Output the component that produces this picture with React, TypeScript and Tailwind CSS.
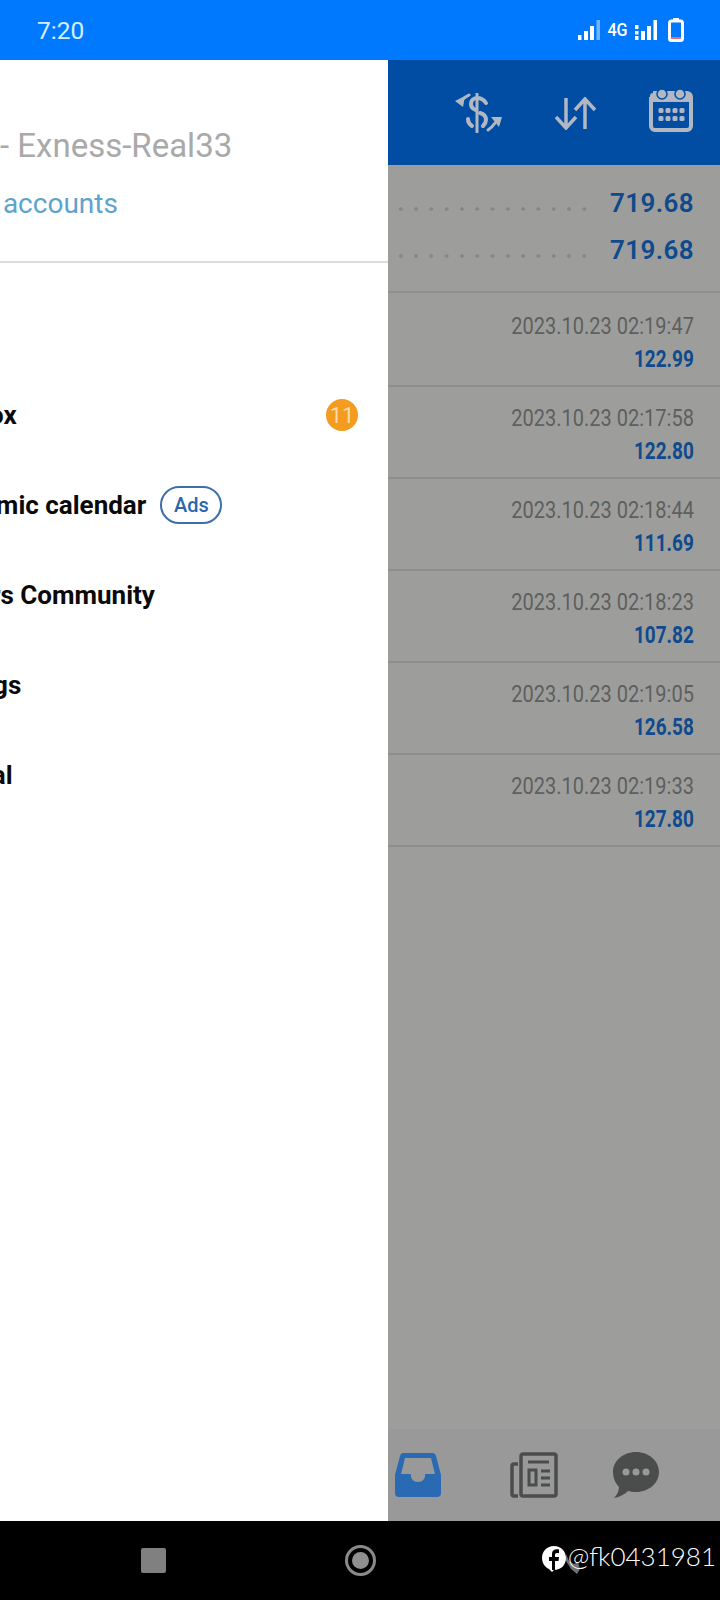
const roboto = "[font-family:Roboto,'Liberation_Sans',sans-serif]"

const menuItems = ['Mailbox', 'Economic calendar', 'Traders Community', 'Settings', 'Journal']

const deals = [
    { time: '2023.10.23 02:19:47', price: '122.99' },
    { time: '2023.10.23 02:17:58', price: '122.80' },
    { time: '2023.10.23 02:18:44', price: '111.69' },
    { time: '2023.10.23 02:18:23', price: '107.82' },
    { time: '2023.10.23 02:19:05', price: '126.58' },
    { time: '2023.10.23 02:19:33', price: '127.80' }
]

const SignalIcon = ({ dots }: { dots?: boolean }) => (
    <svg width="22" height="20" viewBox="0 0 22 20" fill="#fff">
        {dots ? (
            <>
                <rect x="0" y="5" width="3.500" height="4" />
                <rect x="0" y="11" width="3.500" height="3.500" />
                <rect x="0" y="16" width="3.500" height="4" />
            </>
        ) : (
            <rect x="0" y="15" width="3.500" height="5" />
        )}
        <rect x="6" y="11" width="4" height="9" />
        <rect x="12" y="6" width="4" height="14" />
        <rect x="18.500" y="0" width="3.500" height="20" opacity={dots ? 1 : 0.45} />
    </svg>
)

const BatteryIcon = () => (
    <svg width="16" height="24" viewBox="0 0 16 24">
        <rect x="5" y="0" width="6" height="3" fill="#fff" />
        <rect x="1.500" y="3" width="13" height="19.500" rx="2" fill="none" stroke="#fff" strokeWidth="3" />
        <rect x="3" y="19" width="10" height="2" fill="#e07070" />
    </svg>
)

const ExchangeIcon = () => (
    <svg className="mt-[5px]" width="48" height="40" viewBox="0 0 48 40" fill="none" stroke="#b2b8c2" strokeLinecap="round">
        <path d="M22 1v38" strokeWidth="3" />
        <path d="M31 10c-2-3-5-5-9-5-4 0-6 3-6 6 0 3 2 5 5 6" strokeWidth="4" />
        <path d="M25 20c4 1 6 4 6 7 0 2-1 4-3 6" strokeWidth="4" />
        <path d="M13 26c0 3 1 5 4 7" strokeWidth="4" />
        <path d="M8 6c2-2 4-3 6-4" strokeWidth="3" />
        <path d="M0 8l10-5-2 11z" fill="#b2b8c2" stroke="none" />
        <path d="M33 37c3-2 5-4 7-7" strokeWidth="3" />
        <path d="M47 24l-11 0 8 10z" fill="#b2b8c2" stroke="none" />
    </svg>
)

const SortIcon = () => (
    <svg className="mt-[6px]" width="43" height="33" viewBox="0 0 43 33" fill="none" stroke="#b2b8c2" strokeWidth="3.500">
        <path d="M12 1v30M2 20l10 11 10-11" />
        <path d="M31 32V2M21 13L31 2l10 11" />
    </svg>
)

const CalendarIcon = () => (
    <svg width="46" height="44" viewBox="0 0 46 44">
        <path
            d="M4 5h34a4 4 0 0 1 4 4v29a4 4 0 0 1-4 4H6a4 4 0 0 1-4-4V9"
            transform="translate(1 0)"
            fill="none"
            stroke="#b2b8c2"
            strokeWidth="4"
        />
        <rect x="2" y="5" width="42" height="9" rx="3" fill="#b2b8c2" />
        <circle cx="14" cy="6" r="5" fill="#b2b8c2" stroke="#014da3" strokeWidth="1.500" />
        <circle cx="32" cy="6" r="5" fill="#b2b8c2" stroke="#014da3" strokeWidth="1.500" />
        {[12, 19, 26, 33].map((x) => (
            <g key={x} fill="#b2b8c2">
                <rect x={x - 1.5} y="20" width="5" height="5" rx="1.500" />
                <rect x={x - 1.5} y="28" width="5" height="5" rx="1.500" />
            </g>
        ))}
    </svg>
)

const InboxIcon = () => (
    <svg width="46" height="44" viewBox="0 0 46 44">
        <path
            d="M9 0h28a4 4 0 0 1 4 3l5 19v18a4 4 0 0 1-4 4H4a4 4 0 0 1-4-4V22L5 3a4 4 0 0 1 4-3z"
            fill="#2a6ab3"
        />
        <path d="M10 5h26l4 16H31c-1 0-1 1-1 2 0 3-3 6-7 6s-7-3-7-6c0-1 0-2-1-2H6z" fill="#989998" />
    </svg>
)

const NewsIcon = () => (
    <svg width="48" height="46" viewBox="0 0 48 46" fill="none" stroke="#4b4d4d" strokeWidth="3.500">
        <path d="M8 12H4a2 2 0 0 0-2 2v28a2 2 0 0 0 2 2h4" />
        <rect x="11" y="2" width="35" height="42" rx="2" />
        <path d="M18 10h21" strokeWidth="3" />
        <rect x="19" y="18" width="7" height="15" strokeWidth="3" />
        <path d="M31 19h9M31 26h9M31 33h9" strokeWidth="3" />
    </svg>
)

const ChatIcon = () => (
    <svg width="46" height="46" viewBox="0 0 46 46">
        <path
            d="M23 0c13 0 23 9 23 20s-10 20-23 20c-3 0-6-.5-8-1-3 3-8 6-14 7 3-3 5-7 5-11C2 31 0 26 0 20 0 9 10 0 23 0z"
            fill="#4b4d4d"
        />
        <circle cx="13" cy="20" r="3.500" fill="#989998" />
        <circle cx="23" cy="20" r="3.500" fill="#989998" />
        <circle cx="33" cy="20" r="3.500" fill="#989998" />
    </svg>
)

const BalanceRow = ({ value }: { value: string }) => (
    <div className="flex items-end h-[47px]">
        <div className="flex-1 h-[4px] mb-[9px] mr-[18px] bg-right bg-[radial-gradient(circle,#858685_1.500px,transparent_2px)] bg-[length:15.300px_4px]" />
        <span className="text-[26px] leading-[30px] font-semibold text-[#0f4a8c] tracking-[0.4px] -translate-y-[2px]">{value}</span>
    </div>
)

export default function App() {
    return (
        <div className={`w-[720px] h-[1600px] flex flex-col overflow-hidden bg-black ${roboto}`}>
            <div className="h-[60px] shrink-0 bg-[#0079fe] flex items-center pl-[37px] pr-[36px]">
                <span className="text-[24.500px] text-[#d3f0ff] flex-1 pt-[2px]">7:20</span>
                <div className="flex items-center text-white">
                    <SignalIcon />
                    <span className="text-[19px] font-medium mx-[7px] w-[21px] flex justify-center scale-x-[0.85]">4G</span>
                    <SignalIcon dots />
                    <div className="ml-[11px]">
                        <BatteryIcon />
                    </div>
                </div>
            </div>

            <div className="flex-1 flex min-h-0">
                <div className="w-[388px] shrink-0 bg-white overflow-hidden">
                    <div className="h-[203px] border-b-2 border-[#dcdcdc] pt-[66px] whitespace-nowrap">
                        <div className="text-[33px] leading-[40px] text-[#a9a9a9]">- Exness-Real33</div>
                        <div className="text-[28px] leading-[34px] text-[#5ea3cc] mt-[21px] -ml-[105px]">Manage accounts</div>
                    </div>
                    <div className="pt-[107px] -ml-[76px] pr-[30px] flex flex-col">
                        {menuItems.map((item, i) => (
                            <div key={item} className="h-[90px] flex items-center text-[26px] font-bold text-[#0a0a0a] whitespace-nowrap">
                                <span>{item}</span>
                                {i === 1 && (
                                    <span className="ml-[14px] w-[62px] h-[38px] rounded-full border-2 border-[#3d70ab] text-[#2a66ad] text-[20px] font-medium flex items-center justify-center">
                                        Ads
                                    </span>
                                )}
                                {i === 0 && (
                                    <span className="ml-auto w-[32px] h-[32px] rounded-full bg-[#f39c1f] text-[#f8dca8] text-[22px] font-normal flex items-center justify-center">
                                        11
                                    </span>
                                )}
                            </div>
                        ))}
                    </div>
                </div>

                <div className="flex-1 min-w-0 flex flex-col bg-[#9d9e9c]">
                    <div className="h-[105px] shrink-0 bg-[#014da3] flex items-center pl-[67px] pr-[26px] pb-[5px] justify-between">
                        <ExchangeIcon />
                        <SortIcon />
                        <CalendarIcon />
                    </div>
                    <div className="h-[128px] shrink-0 border-b-2 border-[#8f908e] pr-[26px] pt-[8px]">
                        <BalanceRow value="719.68" />
                        <BalanceRow value="719.68" />
                    </div>
                    {deals.map((d, i) => (
                        <div
                            key={d.time}
                            className={`${i === 0 ? 'h-[94px] pt-[20px]' : 'h-[92px] pt-[18px]'} shrink-0 border-b-2 border-[#8f908e] pr-[26px] flex flex-col items-end`}
                        >
                            <span className="text-[23px] leading-[28px] text-[#5e5f5f] origin-right scale-x-[0.87] whitespace-nowrap">{d.time}</span>
                            <span className="text-[24px] leading-[30px] font-bold text-[#0f4a8c] origin-right scale-x-[0.79] mt-[3px]">{d.price}</span>
                        </div>
                    ))}
                    <div className="flex-1" />
                    <div className="h-[92px] shrink-0 bg-[#989998] flex items-center pl-[7px]">
                        <InboxIcon />
                        <div className="ml-[69px]">
                            <NewsIcon />
                        </div>
                        <div className="ml-[55px]">
                            <ChatIcon />
                        </div>
                    </div>
                </div>
            </div>

            <div className="relative h-[79px] shrink-0 bg-black flex items-center pl-[141px]">
                <div className="w-[25px] h-[25px] rounded-[2px] bg-[#808080]" />
                <div className="ml-[179px] w-[31px] h-[31px] rounded-full border-[3px] border-[#8a8a8a] flex items-center justify-center">
                    <div className="w-[17px] h-[17px] rounded-full bg-[#8f8f8f]" />
                </div>
                <svg className="ml-[190px] mt-[4px]" width="14" height="22" viewBox="0 0 14 22">
                    <path d="M0 2l3 7 5 3 4-2 2 7-3 5-6-5-5-8z" fill="#707070" />
                </svg>
                <div className="absolute right-[4px] top-[22px] flex items-center">
                    <svg width="26" height="28" viewBox="0 0 26 28">
                        <path d="M13 1C6 1 1 6 1 13c0 5 3 9 7 11l3 3 2-2c7 0 12-5 12-12S20 1 13 1z" fill="#fff" />
                        <path d="M14 25v-9h3.500l.5-4h-4v-2c0-1.200.5-2 2-2h2V4.500c-4-.8-7 .5-7 4.500v3H8v4h3v9z" fill="#000" />
                    </svg>
                    <span className="ml-[1px] mb-[6px] text-[26px] font-light text-white [font-family:Lato,sans-serif] leading-none">@fk0431981</span>
                </div>
            </div>
        </div>
    )
}
